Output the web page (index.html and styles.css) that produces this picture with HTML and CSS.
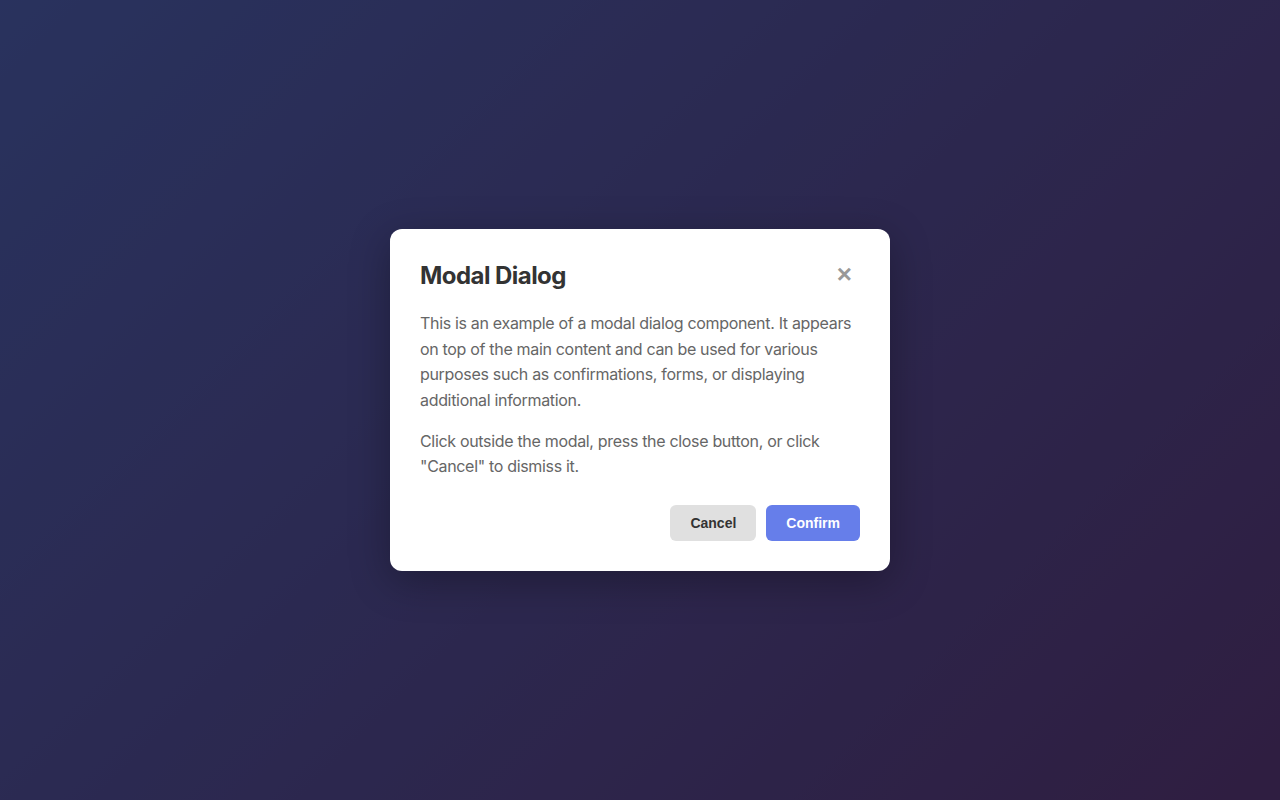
FILE: index.html
```html
<!DOCTYPE html>
<html lang="en">
<head>
<meta charset="utf-8">
<title>Modal Dialog</title>
<link rel="stylesheet" href="styles.css">
</head>
<body>
<div class="backdrop">
  <div class="overlay">
    <div class="modal">
      <div class="modal-header">
        <h2 class="modal-title">Modal Dialog</h2>
        <button class="close-btn" aria-label="Close">&times;</button>
      </div>
      <div class="modal-body">
        <p>This is an example of a modal dialog component. It appears on top of the main content and can be used for various purposes such as confirmations, forms, or displaying additional information.</p>
        <p>Click outside the modal, press the close button, or click "Cancel" to dismiss it.</p>
      </div>
      <div class="modal-footer">
        <button class="btn btn-cancel">Cancel</button>
        <button class="btn btn-confirm">Confirm</button>
      </div>
    </div>
  </div>
</div>
</body>
</html>
```
FILE: styles.css
```css
html, body {
  margin: 0;
  padding: 0;
  height: 100%;
}
body {
  font-family: Inter, "Noto Sans", sans-serif;
}
.backdrop {
  height: 100%;
  background: linear-gradient(135deg, #667eea 0%, #764ba2 100%);
}
.overlay {
  height: 100%;
  background: rgba(0, 0, 0, 0.6);
  display: flex;
  align-items: center;
  justify-content: center;
}
.modal {
  width: 500px;
  box-sizing: border-box;
  background: #fff;
  border-radius: 12px;
  padding: 30px;
  box-shadow: 0 10px 40px rgba(0, 0, 0, 0.3);
}
.modal-header {
  display: flex;
  align-items: center;
  justify-content: space-between;
  margin-bottom: 18px;
}
.modal-title {
  margin: 0;
  font-size: 24px;
  font-weight: 700;
  color: #333;
  line-height: 34px;
  letter-spacing: -0.55px;
}
.close-btn {
  border: none;
  background: none;
  font-family: "Liberation Sans", Arial, sans-serif;
  font-weight: 700;
  font-size: 26px;
  line-height: 1;
  color: #999;
  padding: 0 5px;
  margin: 0 3px 4px 0;
  cursor: pointer;
}
.modal-body p {
  margin: 0 0 15px;
  font-size: 16px;
  line-height: 1.6;
  color: #666;
  letter-spacing: -0.32px;
}
.modal-body p:last-child {
  margin-bottom: 0;
}
.modal-footer {
  display: flex;
  justify-content: flex-end;
  gap: 10px;
  margin-top: 25px;
}
.btn {
  border: none;
  border-radius: 6px;
  padding: 10px 20px;
  font-family: "Liberation Sans", Arial, sans-serif;
  font-size: 14px;
  font-weight: 700;
  line-height: 16px;
  cursor: pointer;
}
.btn-cancel {
  background: #e0e0e0;
  color: #333;
}
.btn-confirm {
  background: #667eea;
  color: #fff;
}
```
